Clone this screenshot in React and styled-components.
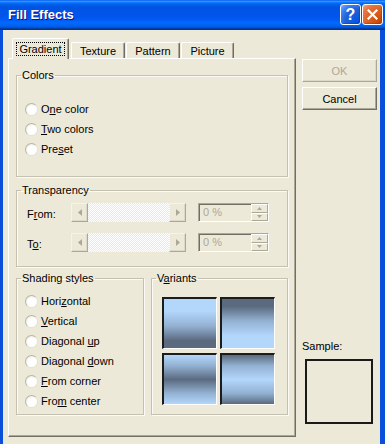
import React from 'react'
import styled, { createGlobalStyle } from 'styled-components'

const GlobalStyle = createGlobalStyle`
  body {
    margin: 0;
    font-family: "Liberation Sans", Arial, sans-serif;
    font-size: 11px;
    color: #000;
  }
`

const face = '#ECE9D8'
const shadow = '#ACA899'
const darkShadow = '#716F64'

const tabs = [
  { label: 'Gradient', width: 57, active: true },
  { label: 'Texture', width: 54 },
  { label: 'Pattern', width: 54 },
  { label: 'Picture', width: 53 },
]

const colorOptions = [
  ['O', 'n', 'e color'],
  ['', 'T', 'wo colors'],
  ['Pre', 's', 'et'],
]

const shadingOptions = [
  ['Hori', 'z', 'ontal'],
  ['', 'V', 'ertical'],
  ['Diagonal ', 'u', 'p'],
  ['Diagonal ', 'd', 'own'],
  ['', 'F', 'rom corner'],
  ['Fro', 'm', ' center'],
]

const light = '#b3d6fb'
const mid = '#93b1d2'
const dark = '#5b6a7f'

const variants = [
  `linear-gradient(${light} 0%, ${light} 25%, ${mid} 55%, ${dark} 85%, ${dark} 100%)`,
  `linear-gradient(${dark} 0%, ${dark} 15%, ${mid} 45%, ${light} 75%, ${light} 100%)`,
  `linear-gradient(${light} 0%, ${mid} 22%, ${dark} 50%, ${mid} 78%, ${light} 100%)`,
  `linear-gradient(${dark} 0%, ${mid} 22%, ${light} 50%, ${mid} 78%, ${dark} 100%)`,
]

const Mnemonic = ({ parts }) => (
  <span>
    {parts[0]}
    <u>{parts[1]}</u>
    {parts[2]}
  </span>
)

const Radio = ({ parts }) => (
  <RadioRow>
    <RadioCircle />
    <Mnemonic parts={parts} />
  </RadioRow>
)

const Arrow = ({ dir }) => (
  <svg width="4" height="7" viewBox="0 0 4 7">
    <polygon points={dir === 'left' ? '4,0 4,7 0,3.5' : '0,0 0,7 4,3.5'} fill={shadow} />
  </svg>
)

const SpinArrow = ({ up }) => (
  <svg width="5" height="3" viewBox="0 0 5 3">
    <polygon points={up ? '0,3 5,3 2.5,0' : '0,0 5,0 2.5,3'} fill={shadow} />
  </svg>
)

const SliderRow = ({ label }) => (
  <TransRow>
    <TransLabel>
      <Mnemonic parts={label} />
    </TransLabel>
    <Track>
      <ArrowButton><Arrow dir="left" /></ArrowButton>
      <TrackFill />
      <ArrowButton><Arrow dir="right" /></ArrowButton>
    </Track>
    <Edit>
      <EditText>0 %</EditText>
      <Spin>
        <SpinButton><SpinArrow up /></SpinButton>
        <SpinButton><SpinArrow /></SpinButton>
      </Spin>
    </Edit>
  </TransRow>
)

const App = () => {
  return (
    <Window>
      <GlobalStyle />
      <TitleBar>
        <Title>Fill Effects</Title>
        <TitleButton $kind="help">?</TitleButton>
        <TitleButton $kind="close">
          <svg width="11" height="11" viewBox="0 0 11 11">
            <path d="M1.5 1.5 L9.5 9.5 M9.5 1.5 L1.5 9.5" stroke="#fff" strokeWidth="2.2" strokeLinecap="square" />
          </svg>
        </TitleButton>
      </TitleBar>
      <Body>
        <LeftCol>
          <TabStrip>
            {tabs.map((t) => (
              <Tab key={t.label} $active={t.active} $w={t.width}>
                {t.active ? <Focus>{t.label}</Focus> : t.label}
              </Tab>
            ))}
          </TabStrip>
          <Panel>
            <Group $h={108} $mb={7}>
              <Legend>Colors</Legend>
              <RadioList $top={17}>
                {colorOptions.map((p) => (
                  <Radio key={p.join('')} parts={p} />
                ))}
              </RadioList>
            </Group>
            <Group $h={83} $mb={5}>
              <Legend>Transparency</Legend>
              <TransBody>
                <SliderRow label={['F', 'r', 'om:']} />
                <SliderRow label={['T', 'o', ':']} />
              </TransBody>
            </Group>
            <GroupRow>
              <Group $h={143} $w={128}>
                <Legend>Shading styles</Legend>
                <RadioList $top={6}>
                  {shadingOptions.map((p) => (
                    <Radio key={p.join('')} parts={p} />
                  ))}
                </RadioList>
              </Group>
              <Group $h={143} $grow>
                <Legend>
                  <Mnemonic parts={['V', 'a', 'riants']} />
                </Legend>
                <SwatchGrid>
                  {variants.map((g) => (
                    <Swatch key={g} style={{ background: g }} />
                  ))}
                </SwatchGrid>
              </Group>
            </GroupRow>
          </Panel>
        </LeftCol>
        <RightCol>
          <Button disabled>OK</Button>
          <Button>Cancel</Button>
          <SampleLabel>Sample:</SampleLabel>
          <SampleBox />
        </RightCol>
      </Body>
    </Window>
  )
}

const Window = styled.div`
  width: 385px;
  height: 444px;
  display: flex;
  flex-direction: column;
  background: #0a4fd9;
  overflow: hidden;
`

const TitleBar = styled.div`
  height: 30px;
  flex-shrink: 0;
  display: flex;
  align-items: center;
  padding: 0 2px 1px 8px;
  box-sizing: border-box;
  background: linear-gradient(
    to bottom,
    #0058ee 0%,
    #3593ff 4%,
    #288eff 6%,
    #127dff 8%,
    #036ffc 10%,
    #0262ee 14%,
    #0057e5 20%,
    #0054e3 24%,
    #0055eb 56%,
    #005bf5 66%,
    #026afe 76%,
    #0062ef 86%,
    #0052d6 92%,
    #0040ab 94%,
    #003092 100%
  );
`

const Title = styled.div`
  flex: 1;
  color: #fff;
  font-weight: bold;
  font-size: 13px;
  text-shadow: 1px 1px #0f1089;
`

const TitleButton = styled.div`
  width: 21px;
  height: 21px;
  box-sizing: border-box;
  margin-left: 1px;
  border: 1px solid #fff;
  border-radius: 3px;
  display: flex;
  align-items: center;
  justify-content: center;
  color: #fff;
  font-weight: bold;
  font-size: 16px;
  background: ${(p) =>
    p.$kind === 'close'
      ? 'radial-gradient(circle at 90% 90%, #cc4600 0%, #dc6527 55%, #e57a4a 80%, #f4a888 100%)'
      : 'radial-gradient(circle at 90% 90%, #0054e9 0%, #2263d5 55%, #4485f5 80%, #8ab4fb 100%)'};
  box-shadow: inset -1px -1px 1px rgba(0, 0, 0, 0.2);
`

const Body = styled.div`
  flex: 1;
  display: flex;
  background: ${face};
  margin: 0 5px 0 3px;
  padding: 8px 0 7px 5px;
`

const LeftCol = styled.div`
  width: 288px;
  display: flex;
  flex-direction: column;
`

const TabStrip = styled.div`
  height: 20px;
  display: flex;
  align-items: flex-end;
  padding-left: 4px;
`

const Tab = styled.div`
  position: relative;
  z-index: 1;
  box-sizing: border-box;
  width: ${(p) => p.$w}px;
  height: ${(p) => (p.$active ? 21 : 16)}px;
  margin-right: ${(p) => (p.$active ? 2 : 1)}px;
  margin-bottom: ${(p) => (p.$active ? -1 : 0)}px;
  padding-top: ${(p) => (p.$active ? 3 : 2)}px;
  display: flex;
  justify-content: center;
  align-items: flex-start;
  background: ${face};
  border-top: 1px solid #fff;
  border-left: 1px solid #fff;
  border-right: 1px solid ${darkShadow};
  box-shadow: inset -1px 0 0 ${shadow};
  border-radius: 2px 2px 0 0;
`

const Focus = styled.span`
  border: 1px dotted #000;
  padding: 0 2px;
  line-height: 12px;
`

const Panel = styled.div`
  height: 379px;
  box-sizing: border-box;
  display: flex;
  flex-direction: column;
  padding: 10px 7px 0;
  border-top: 1px solid #fff;
  border-left: 1px solid #fff;
  border-right: 1px solid ${darkShadow};
  border-bottom: 1px solid ${darkShadow};
  box-shadow: inset -1px -1px 0 ${shadow};
`

const Group = styled.fieldset`
  box-sizing: border-box;
  margin: 0 0 ${(p) => p.$mb || 0}px;
  padding: 0;
  min-width: 0;
  height: ${(p) => p.$h}px;
  ${(p) => (p.$w ? `width: ${p.$w}px;` : '')}
  ${(p) => (p.$grow ? 'flex: 1;' : '')}
  border: 1px solid #c4c1b2;
  box-shadow: inset 1px 1px 0 #fbfaf6, 1px 1px 0 #fbfaf6;
`

const Legend = styled.legend`
  margin-left: 4px;
  padding: 0 1px;
  font-size: 11px;
  line-height: 13px;
`

const RadioList = styled.div`
  display: flex;
  flex-direction: column;
  padding: ${(p) => p.$top}px 0 0 8px;
`

const RadioRow = styled.label`
  height: 20px;
  display: flex;
  align-items: center;
  gap: 3px;
`

const RadioCircle = styled.span`
  width: 13px;
  height: 13px;
  box-sizing: border-box;
  flex-shrink: 0;
  border-radius: 50%;
  border: 1px solid #e4e1d4;
  border-top-color: #b9b6a7;
  border-left-color: #b9b6a7;
  background: radial-gradient(circle at 62% 62%, #ffffff 0%, #ffffff 50%, #eceadf 80%, #dbd8ca 100%);
`

const TransBody = styled.div`
  display: flex;
  flex-direction: column;
  gap: 11px;
  padding: 6px 0 0 10px;
`

const TransRow = styled.div`
  height: 19px;
  display: flex;
  align-items: center;
`

const TransLabel = styled.div`
  width: 44px;
  padding-top: 2px;
`

const Track = styled.div`
  width: 115px;
  height: 19px;
  display: flex;
`

const ArrowButton = styled.div`
  width: 17px;
  box-sizing: border-box;
  display: flex;
  align-items: center;
  justify-content: center;
  background: ${face};
  border-top: 1px solid #f4f3ee;
  border-left: 1px solid #f4f3ee;
  border-right: 1px solid ${shadow};
  border-bottom: 1px solid ${shadow};
  box-shadow: inset -1px -1px 0 #dcd9cb;
`

const TrackFill = styled.div`
  flex: 1;
  background: repeating-conic-gradient(#ffffff 0 25%, ${face} 0 50%) 0 0 / 2px 2px;
`

const Edit = styled.div`
  width: 71px;
  height: 19px;
  margin-left: 12px;
  box-sizing: border-box;
  display: flex;
  background: ${face};
  border-top: 1px solid ${shadow};
  border-left: 1px solid ${shadow};
  border-right: 1px solid #fff;
  border-bottom: 1px solid #fff;
  box-shadow: inset 1px 1px 0 ${darkShadow};
`

const EditText = styled.div`
  flex: 1;
  padding: 2px 0 0 4px;
  color: ${shadow};
`

const Spin = styled.div`
  width: 17px;
  display: flex;
  flex-direction: column;
`

const SpinButton = styled.div`
  flex: 1;
  box-sizing: border-box;
  display: flex;
  align-items: center;
  justify-content: center;
  border-top: 1px solid #fff;
  border-left: 1px solid #fff;
  border-right: 1px solid ${shadow};
  border-bottom: 1px solid ${shadow};
`

const GroupRow = styled.div`
  display: flex;
  gap: 7px;
`

const SwatchGrid = styled.div`
  display: grid;
  grid-template-columns: 55px 55px;
  grid-template-rows: 52px 52px;
  column-gap: 3px;
  row-gap: 4px;
  padding: 12px 0 0 10px;
`

const Swatch = styled.div`
  box-sizing: border-box;
  border-top: 2px solid #1c1c1c;
  border-left: 2px solid #1c1c1c;
  border-right: 1px solid #fff;
  border-bottom: 1px solid #fff;
`

const RightCol = styled.div`
  width: 75px;
  margin-left: 6px;
  display: flex;
  flex-direction: column;
  padding: 21px 0 13px;
`

const Button = styled.button`
  height: 23px;
  margin: 0 0 5px;
  padding: 0;
  font-family: inherit;
  font-size: 11px;
  color: ${(p) => (p.disabled ? shadow : '#000')};
  background: ${face};
  border-top: 1px solid #fff;
  border-left: 1px solid #fff;
  border-right: 1px solid ${(p) => (p.disabled ? shadow : darkShadow)};
  border-bottom: 1px solid ${(p) => (p.disabled ? shadow : darkShadow)};
  box-shadow: inset -1px -1px 0 ${(p) => (p.disabled ? '#dcd9cb' : shadow)};
`

const SampleLabel = styled.div`
  margin-top: auto;
  line-height: 13px;
  margin-bottom: 6px;
`

const SampleBox = styled.div`
  width: 68px;
  height: 65px;
  margin-left: 3px;
  box-sizing: border-box;
  border: 2px solid #1a1a1a;
  background: ${face};
`

export default App
